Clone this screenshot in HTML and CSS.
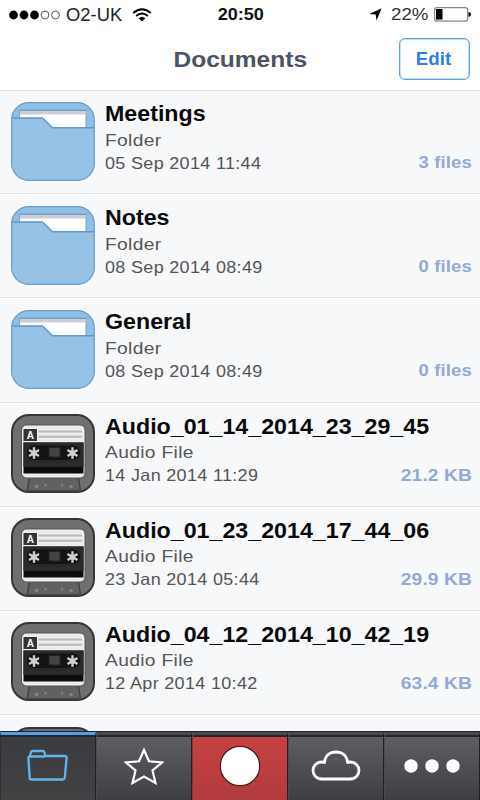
FILE: index.html
```html
<!DOCTYPE html>
<html lang="en">
<head>
<meta charset="utf-8">
<title>Documents</title>
<link rel="stylesheet" href="styles.css">
</head>
<body>
<svg class="defs" aria-hidden="true">
  <defs>
    <clipPath id="tile"><rect x=".5" y=".5" width="83" height="78" rx="17"/></clipPath>
    <symbol id="folder" viewBox="0 0 84 79">
      <rect x=".5" y=".5" width="83" height="78" rx="17" fill="#90bfe5"/>
      <g clip-path="url(#tile)">
        <path d="M0 10Q2 7.5 8 7.5H75.5Q82 7.5 84 10" fill="none" stroke="#7fb0d8"/>
        <path d="M8.5 26V8.5H75V26" fill="#fff" stroke="#769fbf"/>
        <path d="M9 9h65.5v3.4H9z" fill="#c9ced5"/>
        <path d="M0 16H31.5L41.5 25.7H84V79H0z" fill="#96c2e6" stroke="#5d98c9" stroke-width="1.4"/>
      </g>
      <rect x=".7" y=".7" width="82.6" height="77.6" rx="17" fill="none" stroke="#6d9dc1" stroke-width="1.2"/>
    </symbol>
    <symbol id="reel" viewBox="-6 -6 12 12">
      <path d="M0-5.3V5.3M-4.6-2.7 4.6 2.7M-4.6 2.7 4.6-2.7" stroke="#d0d0d0" stroke-width="2.2"/>
      <circle r="2.6" fill="#d0d0d0"/>
    </symbol>
    <symbol id="cassette" viewBox="0 0 84 79">
      <rect x="1" y="1" width="82" height="77" rx="17" fill="#6f6f6f" stroke="#363636" stroke-width="2"/>
      <path d="M18.5 63H67.5L69.5 77H16z" fill="#616161" stroke="#3f3f3f" stroke-width="1.3"/>
      <circle cx="25.5" cy="72.5" r="1.8" fill="#858585"/><circle cx="34.5" cy="71" r="1.6" fill="#7c7c7c"/><circle cx="51" cy="71" r="1.6" fill="#7c7c7c"/><circle cx="60" cy="72.5" r="1.8" fill="#858585"/>
      <rect x="10.5" y="11" width="63.5" height="53" rx="5" fill="#ececec" stroke="#555"/>
      <rect x="12.5" y="15" width="13.5" height="12" fill="#353535"/>
      <text x="19.3" y="24.7" class="tape-letter">A</text>
      <path d="M27.5 17.5H71M27.5 22.8H71" stroke="#b8b8b8" stroke-width="2"/>
      <path d="M12.5 28.5H72.5V59.5H12.5z" fill="#0d0d0d"/>
      <path d="M12.5 28.5H72.5V53H12.5z" fill="#292929"/>
      <rect x="16" y="31.5" width="53" height="14.5" rx="7" fill="#141414"/>
      <use href="#reel" x="16.5" y="32.5" width="13" height="13"/>
      <use href="#reel" x="55" y="32.5" width="13" height="13"/>
      <rect x="38" y="33.5" width="11" height="9.5" fill="#444" stroke="#222"/>
      <path d="M12.5 50H72.5" stroke="#333"/>
    </symbol>
  </defs>
</svg>
<div class="screen">
  <header class="header">
    <div class="status">
      <div class="carrier">
        <svg width="53" height="12" viewBox="0 0 53 12"><g fill="#000"><circle cx="4.5" cy="6" r="4.4"/><circle cx="15" cy="6" r="4.4"/><circle cx="25.5" cy="6" r="4.4"/></g><g fill="none" stroke="#555"><circle cx="36" cy="6" r="3.9"/><circle cx="46.5" cy="6" r="3.9"/></g></svg>
        <span class="txt carrier-name">O2-UK</span>
        <svg class="wifi" width="20" height="14" viewBox="0 0 20 14"><path d="M1.2 5.1Q10-2.6 18.8 5.1M4.2 8Q10 3.1 15.8 8" fill="none" stroke="#000" stroke-width="2"/><path d="M6.7 10.3Q10 7.3 13.3 10.3L10 13.5z"/></svg>
      </div>
      <span class="txt clock">20:50</span>
      <div class="power">
        <svg width="13" height="13" viewBox="0 0 13 13"><path d="M12.7.3 7.5 12.6 6.7 6.5.3 6z"/></svg>
        <span class="txt percent">22%</span>
        <svg class="battery" width="38" height="15" viewBox="0 0 38 15"><rect x=".6" y=".6" width="33" height="13.5" rx="2.2" fill="#fff" stroke="#888" stroke-width="1.2"/><path d="M2 2h6.5v10.6H2z"/><path d="M34.5 4.8Q37 5.3 37 7.3T34.5 9.9z"/></svg>
      </div>
    </div>
    <div class="navbar">
      <h1 class="txt title">Documents</h1>
      <button class="edit"><span class="txt edit-label">Edit</span></button>
    </div>
  </header>
  <main class="list">
    <div class="row"><svg class="icon"><use href="#folder"/></svg><div class="info"><div class="txt name">Meetings</div><div class="txt kind">Folder</div><div class="txt date">05 Sep 2014 11:44</div></div><div class="txt size">3 files</div></div>
    <div class="row"><svg class="icon"><use href="#folder"/></svg><div class="info"><div class="txt name">Notes</div><div class="txt kind">Folder</div><div class="txt date">08 Sep 2014 08:49</div></div><div class="txt size">0 files</div></div>
    <div class="row"><svg class="icon"><use href="#folder"/></svg><div class="info"><div class="txt name">General</div><div class="txt kind">Folder</div><div class="txt date">08 Sep 2014 08:49</div></div><div class="txt size">0 files</div></div>
    <div class="row"><svg class="icon"><use href="#cassette"/></svg><div class="info"><div class="txt name">Audio_01_14_2014_23_29_45</div><div class="txt kind">Audio File</div><div class="txt date">14 Jan 2014 11:29</div></div><div class="txt size size-kb">21.2 KB</div></div>
    <div class="row"><svg class="icon"><use href="#cassette"/></svg><div class="info"><div class="txt name">Audio_01_23_2014_17_44_06</div><div class="txt kind">Audio File</div><div class="txt date">23 Jan 2014 05:44</div></div><div class="txt size size-kb">29.9 KB</div></div>
    <div class="row"><svg class="icon"><use href="#cassette"/></svg><div class="info"><div class="txt name">Audio_04_12_2014_10_42_19</div><div class="txt kind">Audio File</div><div class="txt date">12 Apr 2014 10:42</div></div><div class="txt size size-kb">63.4 KB</div></div>
    <div class="row last"><svg class="icon"><use href="#cassette"/></svg><div class="info"><div class="txt name">Audio_05_08_2014_10_47_48</div></div></div>
  </main>
  <nav class="tabs">
    <div class="tab active"><svg width="42" height="34" viewBox="0 0 42 34"><path d="M2.7 29 1.4 9Q1.4 7.5 3 7.5L3.8 3.5Q4.2 2 5.7 2H15.5Q17 2 17.5 3.5L18.5 7H38Q39.8 7 39.6 9L37.8 28.5Q37.6 30.5 35.5 30.5H4.5Q2.7 30.5 2.7 29M3 7.5H18" fill="none" stroke="#65b3ee" stroke-width="2.3" stroke-linejoin="round"/></svg></div>
    <div class="tab"><svg width="40" height="38" viewBox="0 0 40 38"><path d="M20 3 25 14.3 38 15.5 28.5 23.5 31.5 36 20 29.5 8.5 36 11.5 23.5 2 15.5 15 14.3z" fill="none" stroke="#fff" stroke-width="2.2"/></svg></div>
    <div class="tab record"><svg width="44" height="44" viewBox="0 0 44 44"><circle cx="22" cy="22" r="19.7" fill="#fff" stroke="#4a2224" stroke-width="1.3"/></svg></div>
    <div class="tab"><svg width="50" height="32" viewBox="0 0 50 32"><path d="M10.5 29A8.5 8.5 0 0 1 10.5 12Q12 12 13.5 12.5C14 5.5 19 2 25 2S36 5.5 36.5 12.5Q38 12 39.5 12A8.5 8.5 0 0 1 39.5 29z" fill="none" stroke="#fff" stroke-width="2.8" stroke-linejoin="round"/></svg></div>
    <div class="tab"><svg width="58" height="16" viewBox="0 0 58 16"><g fill="#fff"><circle cx="8" cy="8" r="6.7"/><circle cx="29" cy="8" r="6.7"/><circle cx="50" cy="8" r="6.7"/></g></svg></div>
  </nav>
</div>
</body>
</html>
```
FILE: styles.css
```css
* { box-sizing: border-box; }
body { margin: 0; font-family: "Liberation Sans", Arial, sans-serif; }
.defs { display: block; width: 0; height: 0; }
.screen { display: flex; flex-direction: column; width: 480px; height: 800px; overflow: hidden; background: #f7f8fa; }
svg { display: block; flex: none; }
.txt { display: block; white-space: nowrap; transform-origin: left center; }

.header { flex: none; height: 91px; background: #fff; border-bottom: 1px solid #dcdee0; }
.status { display: grid; grid-template-columns: 1fr auto 1fr; align-items: center; height: 29px; padding: 0 8px 0 9px; }
.carrier { display: flex; align-items: center; gap: 4px; }
.carrier-name { width: 57px; padding-top: 1px; font-size: 17.5px; color: #222; transform: scaleX(1.05); }
.wifi { margin-left: 5px; }
.clock { padding-top: 1px; font-size: 17px; font-weight: bold; color: #111; transform-origin: center; transform: scaleX(1.06); }
.power { display: flex; align-items: center; justify-content: flex-end; }
.percent { width: 39px; margin-left: 9px; padding-top: 1px; font-size: 17px; color: #333; transform: scaleX(1.1); }
.battery { margin-left: 4px; }
.navbar { display: grid; grid-template-columns: 1fr auto 1fr; align-items: center; height: 60px; padding-right: 10px; }
.title { grid-column: 2; margin: 2px 0 0 10px; font-size: 22.5px; color: #4b5463; transform-origin: center; transform: scaleX(1.09); }
.edit { justify-self: end; width: 71px; height: 42px; padding: 0; font-family: inherit; background: #fff; border: 1.5px solid #559ff5; border-radius: 6px; box-shadow: inset 0 0 0 .5px #8abcf7; }
.edit-label { padding-right: 2px; padding-top: 1px; font-size: 18px; font-weight: bold; color: #2b7de9; transform-origin: center; transform: scaleX(1.04); }

.list { flex: 1; min-height: 0; overflow: hidden; margin-top: -1px; }
.row { display: flex; height: 104.2px; padding: 11.5px 8px 0 10.5px; border-bottom: 1px solid #dfe1e4; box-shadow: 0 1px #fff; }
.row:first-child { border-top: 1px solid #dcdee0; padding-top: 10.5px; }
.icon { width: 84px; height: 79px; }
.tape-letter { font: bold 10px "Liberation Sans", Arial, sans-serif; fill: #fff; text-anchor: middle; }
.info { flex: 1; min-width: 0; padding-left: 10.5px; }
.name { height: 26px; padding-top: .6px; font-size: 21.5px; line-height: 25px; font-weight: bold; color: #0a0a0a; transform: scaleX(1.08); }
.last .name { padding-top: 0; line-height: 26px; }
.kind { height: 24px; font-size: 17px; line-height: 25px; color: #555; letter-spacing: .3px; transform: scaleX(1.13); }
.date { font-size: 16.5px; line-height: 22px; color: #555; letter-spacing: .3px; transform: scaleX(1.09); }
.size { padding-top: 50.5px; font-size: 17px; line-height: 22px; font-weight: bold; color: #92a9d3; letter-spacing: .1px; transform-origin: right center; transform: scaleX(1.09); }
.size-kb { transform: scaleX(1.13); }

.tabs { display: grid; grid-template-columns: repeat(5, 1fr); flex: none; height: 69px; background: #242528; border-top: 1px solid #222326; }
.tab { display: flex; align-items: center; justify-content: center; padding-bottom: 3px; border-top: 3px solid #484a50; border-right: 1px solid #202124; border-left: 1px solid #4a4c51; background: linear-gradient(#25262a 0 2px, #5c5e64 2px, #3e3f43 100%) padding-box; }
.active { border-top-color: #539eea; border-left-color: #2e3032; background: linear-gradient(#242629 0 2px, #3a3c3f 2px, #404244 100%) padding-box; }
.record { border-left-color: #8e3033; background: linear-gradient(#25262a 0 2px, #c74143 2px, #b13b3e 100%) padding-box; }
```
